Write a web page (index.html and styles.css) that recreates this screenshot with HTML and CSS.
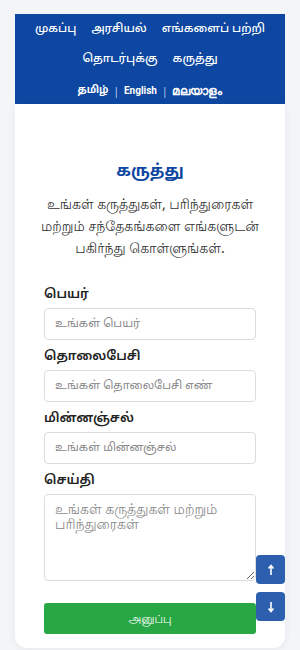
FILE: index.html
```html
<!DOCTYPE html>
<html lang="ta">
<head>
    <meta charset="UTF-8">
    <meta name="viewport" content="width=device-width, initial-scale=1.0">
    <title>கருத்து</title>
    <link rel="stylesheet" href="styles.css">
</head>
<body>
    <div class="page">
        <header class="header">
            <nav class="nav">
                <a href="#">முகப்பு</a>
                <a href="#">அரசியல்</a>
                <a href="#">எங்களைப் பற்றி</a>
                <a href="#">தொடர்புக்கு</a>
                <a href="#">கருத்து</a>
            </nav>
            <div class="lang">
                <a href="#">தமிழ்</a>
                <span class="sep">|</span>
                <a href="#">English</a>
                <span class="sep">|</span>
                <a href="#" class="ml">മലയാളം</a>
            </div>
        </header>

        <main class="card">
            <h1 class="title">கருத்து</h1>
            <p class="intro">உங்கள் கருத்துகள், பரிந்துரைகள் மற்றும் சந்தேகங்களை எங்களுடன் பகிர்ந்து கொள்ளுங்கள்.</p>

            <form class="form">
                <div class="form-group">
                    <label for="name">பெயர்</label>
                    <input type="text" id="name" class="form-control" placeholder="உங்கள் பெயர்">
                </div>
                <div class="form-group">
                    <label for="phone">தொலைபேசி</label>
                    <input type="tel" id="phone" class="form-control" placeholder="உங்கள் தொலைபேசி எண்">
                </div>
                <div class="form-group">
                    <label for="email">மின்னஞ்சல்</label>
                    <input type="email" id="email" class="form-control" placeholder="உங்கள் மின்னஞ்சல்">
                </div>
                <div class="form-group">
                    <label for="message">செய்தி</label>
                    <textarea id="message" class="form-control textarea" placeholder="உங்கள் கருத்துகள் மற்றும் பரிந்துரைகள்"></textarea>
                </div>
                <button type="submit" class="btn-submit">அனுப்பு</button>
            </form>
        </main>
    </div>

    <div class="scroll-btns">
        <button class="scroll-btn" aria-label="மேலே">
            <svg width="10" height="12" viewBox="0 0 10 12"><path d="M5 11V2M2.5 4.5L5 1.5 7.5 4.5" fill="none" stroke="#fff" stroke-width="1.6"/></svg>
        </button>
        <button class="scroll-btn" aria-label="கீழே">
            <svg width="10" height="12" viewBox="0 0 10 12"><path d="M5 1v9M2.5 7.5L5 10.5 7.5 7.5" fill="none" stroke="#fff" stroke-width="1.6"/></svg>
        </button>
    </div>
</body>
</html>
```

FILE: styles.css
```css
* {
    margin: 0;
    padding: 0;
    box-sizing: border-box;
    font-family: 'Noto Sans', 'Lohit Tamil', sans-serif;
}

body {
    background: #f3f5f9;
    min-height: 100vh;
}

.page {
    padding: 14px 15px 0;
}

.header {
    background: #0d47a1;
    padding: 5px 0 5px;
    text-align: center;
}

.nav {
    display: flex;
    flex-wrap: wrap;
    justify-content: center;
    column-gap: 15px;
    row-gap: 10px;
    padding: 0 8px;
}

.nav a {
    color: #fff;
    text-decoration: none;
    font-family: 'Noto Sans Tamil', sans-serif;
    font-size: 11.5px;
    font-weight: 500;
    line-height: 20px;
}

.lang {
    margin-top: 14px;
    display: flex;
    justify-content: center;
    align-items: center;
    gap: 5px;
    line-height: 16px;
}

.lang a {
    color: #fff;
    text-decoration: none;
    font-family: Roboto, 'Noto Sans Tamil', sans-serif;
    font-size: 10px;
    font-weight: 700;
}

.lang a:first-child {
    font-family: 'Noto Sans Tamil', sans-serif;
}

.lang .ml {
    font-size: 12px;
}

.lang .sep {
    color: #c9d6ef;
    font-size: 10px;
}

.card {
    background: #fff;
    border-radius: 0 0 12px 12px;
    box-shadow: 0 2px 8px rgba(0, 0, 0, 0.06);
    padding: 54px 15px 14px;
}

.title {
    text-align: center;
    color: #0d47a1;
    font-family: 'Noto Sans Tamil', sans-serif;
    font-size: 16px;
    font-weight: 700;
    line-height: 28px;
}

.intro {
    margin-top: 7px;
    text-align: center;
    color: #333;
    font-size: 14px;
    line-height: 22px;
}

.form {
    margin-top: 26px;
    padding: 0 14px;
}

.form-group {
    display: flex;
    flex-direction: column;
    gap: 3px;
    margin-bottom: 7px;
}

.form-group label {
    font-family: 'Noto Sans Tamil', sans-serif;
    font-size: 13px;
    font-weight: 600;
    color: #222;
    line-height: 20px;
}

.form-control {
    width: 100%;
    height: 32px;
    padding: 0 10px;
    border: 1px solid #dcdcdc;
    border-radius: 4px;
    background: #fff;
    font-family: 'Noto Sans Tamil', sans-serif;
    font-size: 11.3px;
    color: #333;
}

.form-control::placeholder {
    color: #8a8a8a;
}

.textarea {
    height: 87px;
    padding: 6px 10px;
    resize: vertical;
    font-family: 'Noto Sans', 'Lohit Tamil', sans-serif;
    font-size: 14px;
    line-height: 15px;
}

.btn-submit {
    display: block;
    width: 100%;
    height: 31px;
    margin-top: 22px;
    border: none;
    border-radius: 3px;
    background: #28a745;
    color: #fff;
    font-size: 11.5px;
    cursor: pointer;
}

.scroll-btns {
    position: fixed;
    right: 15px;
    bottom: 29px;
    display: flex;
    flex-direction: column;
    gap: 8px;
}

.scroll-btn {
    width: 29px;
    height: 29px;
    border: none;
    border-radius: 4px;
    background: #2c5fad;
    display: flex;
    align-items: center;
    justify-content: center;
    cursor: pointer;
}
```
